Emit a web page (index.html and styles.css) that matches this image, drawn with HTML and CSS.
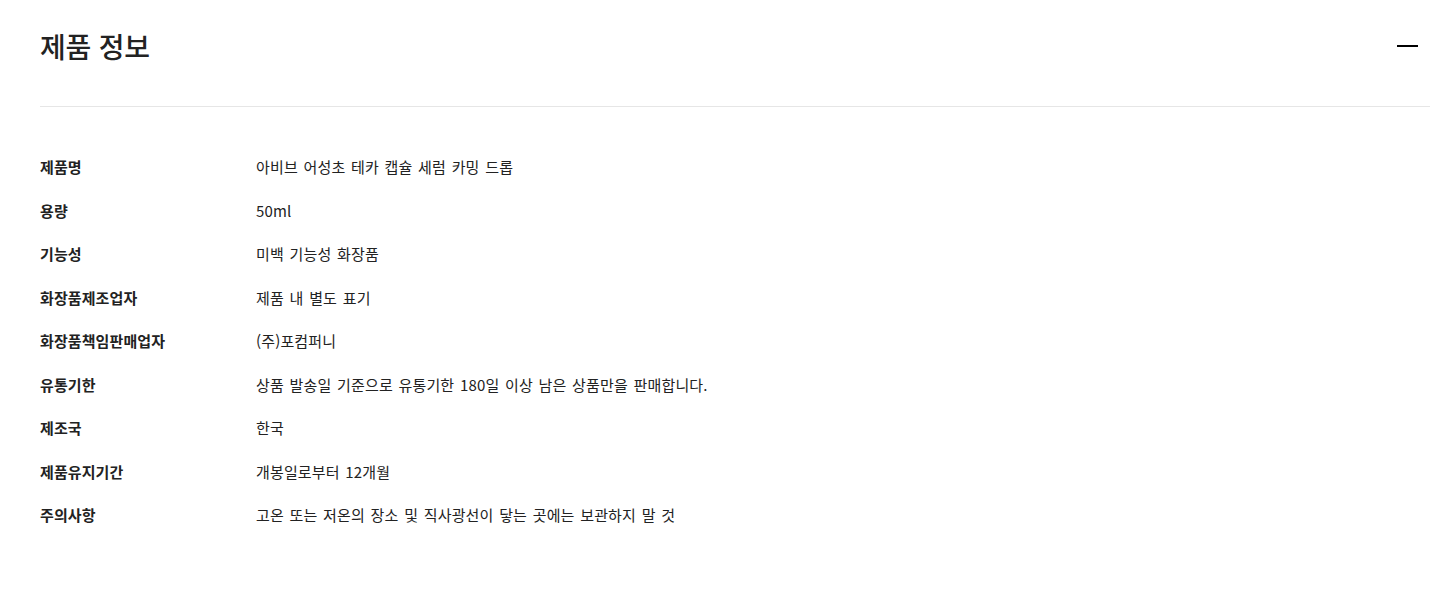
FILE: index.html
```html
<!DOCTYPE html>
<html lang="ko">
<head>
<meta charset="utf-8">
<link rel="stylesheet" href="styles.css">
</head>
<body>
<section class="panel">
  <header class="panel-head">
    <h2 class="title">제품 정보</h2>
    <button class="toggle" aria-label="접기"><span class="bar"></span></button>
  </header>
  <dl class="info">
    <div class="row"><dt>제품명</dt><dd>아비브 어성초 테카 캡슐 세럼 카밍 드롭</dd></div>
    <div class="row"><dt>용량</dt><dd>50ml</dd></div>
    <div class="row"><dt>기능성</dt><dd>미백 기능성 화장품</dd></div>
    <div class="row"><dt>화장품제조업자</dt><dd>제품 내 별도 표기</dd></div>
    <div class="row"><dt>화장품책임판매업자</dt><dd>(주)포컴퍼니</dd></div>
    <div class="row"><dt>유통기한</dt><dd>상품 발송일 기준으로 유통기한 180일 이상 남은 상품만을 판매합니다.</dd></div>
    <div class="row"><dt>제조국</dt><dd>한국</dd></div>
    <div class="row"><dt>제품유지기간</dt><dd>개봉일로부터 12개월</dd></div>
    <div class="row"><dt>주의사항</dt><dd>고온 또는 저온의 장소 및 직사광선이 닿는 곳에는 보관하지 말 것</dd></div>
  </dl>
</section>
</body>
</html>
```
FILE: styles.css
```css
* { box-sizing: border-box; }
html, body { margin: 0; padding: 0; background: #fff; }
body {
  font-family: "Noto Sans CJK KR", "Noto Sans", sans-serif;
  color: #222;
}
.panel {
  margin-left: 40px;
  width: 1390px;
}
.panel-head {
  display: flex;
  align-items: center;
  justify-content: space-between;
  padding: 26px 0 40px;
  border-bottom: 1px solid #e6e6e6;
}
.title {
  margin: 0;
  font-size: 28px;
  line-height: 40px;
  font-weight: 500;
  color: #222;
  letter-spacing: -0.2px;
}
.toggle {
  width: 21px;
  height: 21px;
  margin-right: 12px;
  padding: 0;
  border: 0;
  background: none;
  display: flex;
  align-items: center;
  justify-content: center;
}
.toggle .bar {
  display: block;
  width: 21px;
  height: 2px;
  background: #000;
}
.info {
  margin: 38px 0 0;
  padding: 0;
}
.row {
  display: grid;
  grid-template-columns: 216px 1fr;
  padding: 11px 0;
  font-size: 15px;
  line-height: 21.5px;
}
.row dt {
  font-weight: 700;
  color: #222;
  letter-spacing: 0.1px;
}
.row dd {
  margin: 0;
  color: #222;
  word-spacing: 1.3px;
  letter-spacing: 0.15px;
}
```
